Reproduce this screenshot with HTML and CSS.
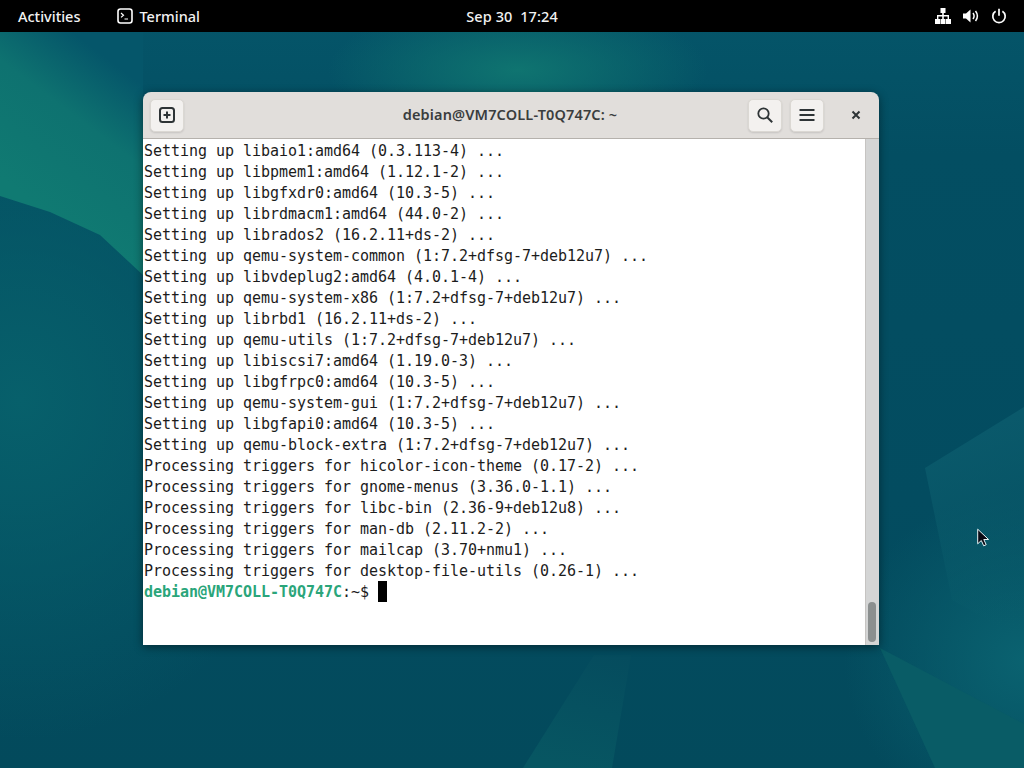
FILE: index.html
```html
<!DOCTYPE html>
<html lang="en">
<head>
<meta charset="utf-8">
<title>Terminal</title>
<link rel="stylesheet" href="styles.css">
</head>
<body>
<div class="desktop">
  <svg class="wallpaper" viewBox="0 0 1024 768" preserveAspectRatio="none" aria-hidden="true">
    <defs>
      <linearGradient id="tl" gradientUnits="userSpaceOnUse" x1="30" y1="200" x2="143" y2="50">
        <stop offset="0" stop-color="#107a72"/>
        <stop offset=".5" stop-color="#0e7270"/>
        <stop offset=".85" stop-color="#05566a"/>
      </linearGradient>
      <linearGradient id="rp" gradientUnits="userSpaceOnUse" x1="925" y1="420" x2="1000" y2="640">
        <stop offset="0" stop-color="#0b5a6c"/>
        <stop offset="1" stop-color="#0a5f6c" stop-opacity="0"/>
      </linearGradient>
      <linearGradient id="bp" gradientUnits="userSpaceOnUse" x1="600" y1="650" x2="570" y2="768">
        <stop offset="0" stop-color="#054c5e"/>
        <stop offset="1" stop-color="#075662"/>
      </linearGradient>
    </defs>
    <polygon points="0,32 143,32 143,275 100,235 50,212 0,196" fill="url(#tl)"/>
    <polygon points="925,468 1024,407 1024,640 952,600" fill="url(#rp)"/>
    <polygon points="880,648 1024,724 1024,768 935,768" fill="#095c66"/>
    <polygon points="594,655 631,655 612,768 523,768" fill="url(#bp)"/>
  </svg>
  <header class="topbar">
    <div class="left">
      <span class="activities">Activities</span>
      <span class="app">
        <svg class="app-icon" viewBox="0 0 16 16"><rect x="1" y="1" width="14" height="14" rx="2.5" fill="none" stroke="#fff" stroke-width="1.6"/><path d="M4 5l2.5 2.2L4 9.4M7.5 11H11" fill="none" stroke="#fff" stroke-width="1.2"/></svg>
        Terminal
      </span>
    </div>
    <div class="clock">Sep 30&nbsp; 17:24</div>
    <div class="status">
      <svg class="status-icon" viewBox="0 0 16 16"><path d="M5.500 0h5v5h-1.700v2H14v4h2v5h-5v-5h1.600V8.500H8.800V11h1.700v5h-5v-5h1.700V8.500H3.400V11H5v5H0v-5h2V7h5.200V5H5.500z" fill="#fff"/></svg>
      <svg class="status-icon" viewBox="0 0 16 16"><path d="M0 5.500h3L7.500 1.500v13L3 10.500H0z" fill="#fff"/><path d="M10 5c1.300 1.800 1.300 4.200 0 6M12.500 3c2.300 3 2.300 7 0 10" fill="none" stroke="#fff" stroke-width="1.500"/></svg>
      <svg class="status-icon" viewBox="0 0 16 16"><path d="M4.600 3.200a6.200 6.200 0 1 0 6.800 0" fill="none" stroke="#fff" stroke-width="1.700"/><path d="M8 .8v7" stroke="#fff" stroke-width="1.700"/></svg>
    </div>
  </header>
  <main class="window">
    <div class="titlebar">
      <button class="btn">
        <svg class="icon" viewBox="0 0 16 16"><rect x="1" y="1" width="14" height="14" rx="2.500" fill="none" stroke="#2e3436" stroke-width="2"/><path d="M8 4.500v7M4.500 8h7" stroke="#2e3436" stroke-width="2"/></svg>
      </button>
      <div class="title">debian@VM7COLL-T0Q747C: ~</div>
      <div class="actions">
        <button class="btn">
          <svg class="icon" viewBox="0 0 16 16"><circle cx="6.500" cy="6.500" r="5.200" fill="none" stroke="#2e3436" stroke-width="1.800"/><path d="M10.200 10.200l5 5" stroke="#2e3436" stroke-width="2"/></svg>
        </button>
        <button class="btn">
          <svg class="icon" viewBox="0 0 16 16"><path d="M.5 3h15M.5 8h15M.5 13h15" stroke="#2e3436" stroke-width="2"/></svg>
        </button>
        <button class="close">
          <svg class="close-icon" viewBox="0 0 10 10"><path d="M1.500 1.500l7 7M8.500 1.500l-7 7" stroke="#2e3436" stroke-width="2"/></svg>
        </button>
      </div>
    </div>
    <div class="body">
<pre class="term">Setting up libaio1:amd64 (0.3.113-4) ...
Setting up libpmem1:amd64 (1.12.1-2) ...
Setting up libgfxdr0:amd64 (10.3-5) ...
Setting up librdmacm1:amd64 (44.0-2) ...
Setting up librados2 (16.2.11+ds-2) ...
Setting up qemu-system-common (1:7.2+dfsg-7+deb12u7) ...
Setting up libvdeplug2:amd64 (4.0.1-4) ...
Setting up qemu-system-x86 (1:7.2+dfsg-7+deb12u7) ...
Setting up librbd1 (16.2.11+ds-2) ...
Setting up qemu-utils (1:7.2+dfsg-7+deb12u7) ...
Setting up libiscsi7:amd64 (1.19.0-3) ...
Setting up libgfrpc0:amd64 (10.3-5) ...
Setting up qemu-system-gui (1:7.2+dfsg-7+deb12u7) ...
Setting up libgfapi0:amd64 (10.3-5) ...
Setting up qemu-block-extra (1:7.2+dfsg-7+deb12u7) ...
Processing triggers for hicolor-icon-theme (0.17-2) ...
Processing triggers for gnome-menus (3.36.0-1.1) ...
Processing triggers for libc-bin (2.36-9+deb12u8) ...
Processing triggers for man-db (2.11.2-2) ...
Processing triggers for mailcap (3.70+nmu1) ...
Processing triggers for desktop-file-utils (0.26-1) ...
<span class="prompt">debian@VM7COLL-T0Q747C</span>:~$ <span class="cursor"> </span></pre>
      <div class="scrollbar"><div class="thumb"></div></div>
    </div>
  </main>
  <svg class="pointer" viewBox="0 0 12 18"><path d="M.7.700v14.600l3.600-3.300 2.400 5.300 2.500-1.100-2.400-5.200h4.800z" fill="#0a0a14" stroke="#e8f4f6" stroke-width="1"/></svg>
</div>
</body>
</html>
```
FILE: styles.css
```css
* { box-sizing: border-box; }
html, body { margin: 0; height: 100%; overflow: hidden; }
.desktop {
  position: relative;
  width: 1024px;
  height: 768px;
  overflow: hidden;
  display: flex;
  flex-direction: column;
  background:
    radial-gradient(ellipse 190px 70px at 518px 70px, #0f7470 0%, rgba(15,116,112,0) 100%),
    radial-gradient(ellipse 180px 170px at 1024px 660px, #0a6270 0%, rgba(10,98,112,0) 100%),
    radial-gradient(ellipse 300px 340px at 20px 400px, #07606b 0%, rgba(7,96,107,0) 100%),
    linear-gradient(180deg, #05566a 0%, #034e62 20%, #034c60 65%, #034a5c 100%);
}
.wallpaper { position: absolute; inset: 0; width: 100%; height: 100%; }
.topbar {
  position: relative;
  height: 32px;
  flex: none;
  background: #000;
  color: #f2f2f2;
  font: 500 14.500px "Noto Sans", "Open Sans", sans-serif;
  display: grid;
  grid-template-columns: 1fr auto 1fr;
  align-items: center;
  padding: 0 18px;
}
.left { display: flex; align-items: center; gap: 37px; }
.app { display: flex; align-items: center; gap: 6px; }
.app-icon { width: 16px; height: 16px; }
.clock { letter-spacing: .1px; }
.status { display: flex; justify-content: flex-end; gap: 12px; margin-right: -1px; }
.status-icon { width: 16px; height: 16px; }
.window {
  position: relative;
  margin: 60px 0 0 143px;
  width: 736px;
  height: 553px;
  border-radius: 8px 8px 0 0;
  overflow: hidden;
  display: flex;
  flex-direction: column;
  box-shadow: 0 2px 10px rgba(0,0,0,.45);
}
.titlebar {
  height: 47px;
  flex: none;
  background: #e1dedb;
  border-bottom: 1px solid #b5b1ac;
  display: grid;
  grid-template-columns: 1fr auto 1fr;
  align-items: center;
  padding: 0 6px 0 7px;
}
.title {
  font: 600 14.500px "Noto Sans", "Open Sans", sans-serif;
  letter-spacing: .15px;
  color: #3a3d3e;
  margin: -2px 0 0 -3px;
}
.actions { display: flex; justify-content: flex-end; align-items: center; gap: 8px; }
.btn {
  width: 34px;
  height: 33px;
  padding: 0;
  border: 1px solid #dbd8d3;
  border-radius: 5px;
  background: #f3f1ef;
  box-shadow: 0 1px 2px rgba(0,0,0,.12);
  display: flex;
  align-items: center;
  justify-content: center;
}
.icon { width: 16px; height: 16px; }
.close {
  width: 34px;
  height: 33px;
  margin-left: 7px;
  padding: 0;
  border: 0;
  background: transparent;
  display: flex;
  align-items: center;
  justify-content: center;
}
.close-icon { width: 10px; height: 10px; }
.body {
  flex: 1;
  display: flex;
  background: #fff;
  min-height: 0;
}
.term {
  flex: 1;
  margin: 0;
  padding: 2px 0 0 1px;
  font: 15px/21px "DejaVu Sans Mono", monospace;
  letter-spacing: -.03px;
  color: #1c1c1c;
  overflow: hidden;
}
.prompt { color: #2aa57a; font-weight: 700; }
.cursor { display: inline-block; width: 9px; height: 21px; background: #000; vertical-align: top; transform: translateY(-1px); }
.scrollbar {
  width: 14px;
  flex: none;
  background: #d4d5d5;
  border-left: 1px solid #c6c4c2;
  display: flex;
  flex-direction: column;
  justify-content: flex-end;
  padding: 0 2px 3px 2px;
}
.thumb { width: 8px; height: 40px; border-radius: 4px; background: #8b8f8f; }
.pointer { position: absolute; left: 977px; top: 528px; width: 12px; height: 19px; }
```
